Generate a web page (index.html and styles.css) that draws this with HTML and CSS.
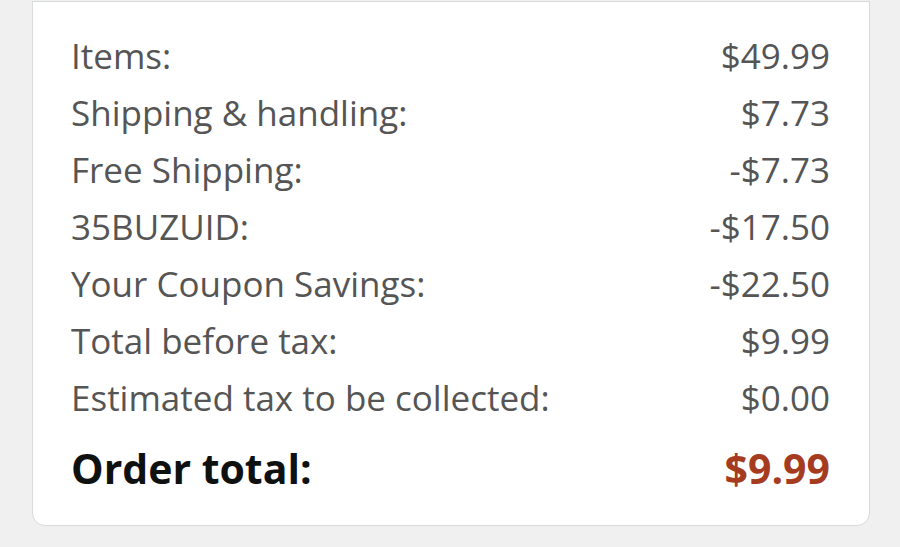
FILE: index.html
```html
<!DOCTYPE html>
<html>
<head>
<meta charset="utf-8">
<link rel="stylesheet" href="styles.css">
</head>
<body>
<div class="card">
  <div class="row"><span>Items:</span><span>$49.99</span></div>
  <div class="row"><span>Shipping &amp; handling:</span><span>$7.73</span></div>
  <div class="row"><span>Free Shipping:</span><span>-$7.73</span></div>
  <div class="row"><span>35BUZUID:</span><span>-$17.50</span></div>
  <div class="row"><span>Your Coupon Savings:</span><span>-$22.50</span></div>
  <div class="row"><span>Total before tax:</span><span>$9.99</span></div>
  <div class="row"><span>Estimated tax to be collected:</span><span>$0.00</span></div>
  <div class="row total"><span>Order total:</span><span class="price">$9.99</span></div>
</div>
</body>
</html>
```
FILE: styles.css
```css
html, body {
  margin: 0;
  padding: 0;
  background: #f0f0f0;
}
body {
  font-family: "Open Sans", sans-serif;
  width: 900px;
  height: 547px;
  overflow: hidden;
}
.card {
  margin: 1px 0 0 32px;
  width: 838px;
  background: #fff;
  border: 1px solid #d8dbdb;
  border-radius: 0 0 13px 13px;
  padding: 25px 39px 20px 38px;
  box-sizing: border-box;
  height: 525px;
}
.row {
  display: flex;
  justify-content: space-between;
  font-size: 35px;
  line-height: 57px;
  color: #555;
}
.row.total {
  font-weight: 700;
  color: #0f1111;
  font-size: 41px;
  line-height: 84px;
}
.price {
  color: #a63c1f;
}
```
